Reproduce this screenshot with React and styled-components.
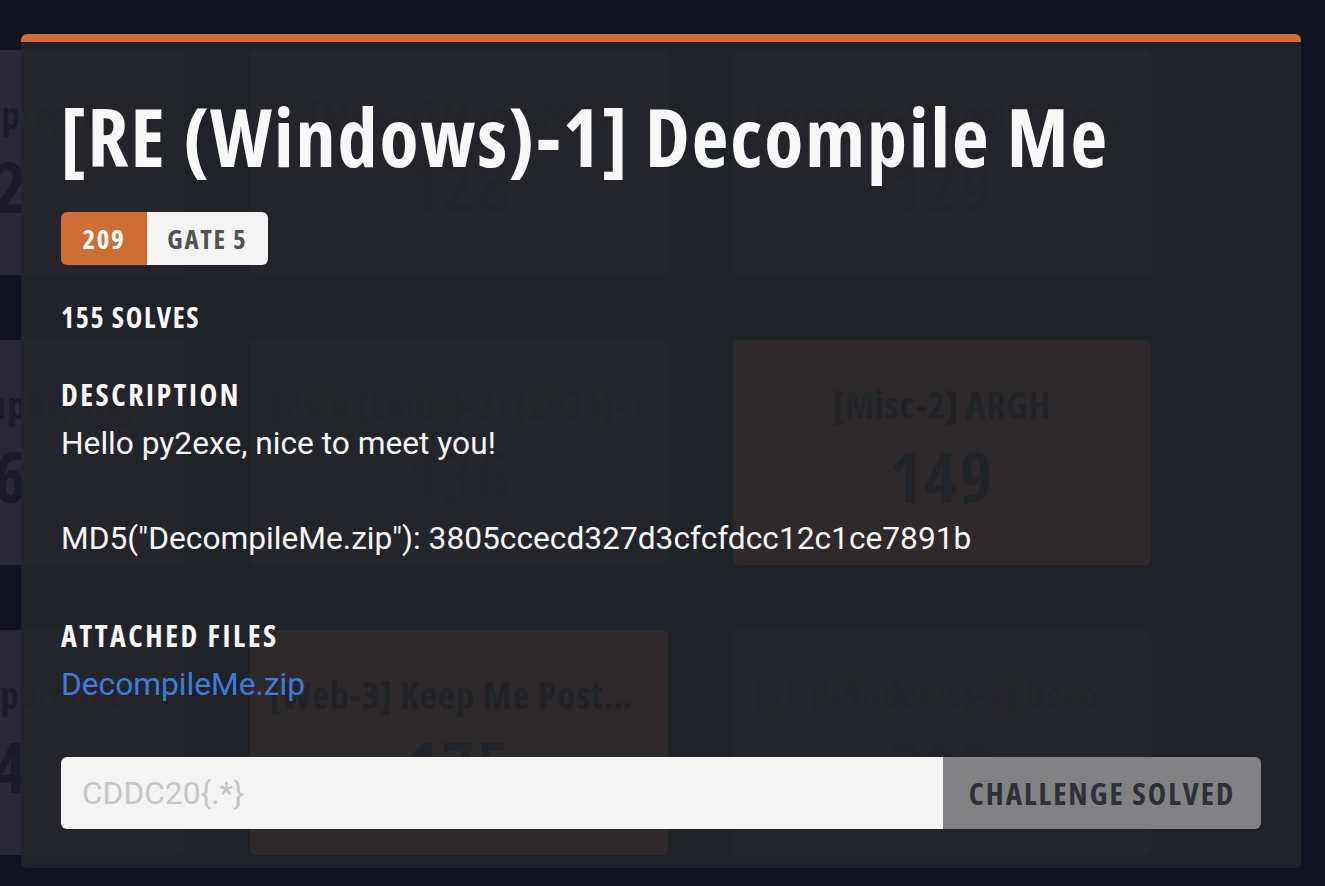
import React from 'react';
import styled, { createGlobalStyle } from 'styled-components';

const COND = `"Open Sans", "Noto Sans", "Liberation Sans", sans-serif`;
const BODY = `Roboto, "Liberation Sans", sans-serif`;

const Global = createGlobalStyle`
  html, body { margin: 0; padding: 0; background: #11131f; overflow: hidden; }
  body { font-family: ${BODY}; }
  * { box-sizing: border-box; }
`;

const Page = styled.div`
  position: relative;
  width: 1325px;
  height: 886px;
  overflow: hidden;
  background: #11131f;
`;

const Grid = styled.div`
  display: grid;
  grid-template-columns: repeat(3, 418px);
  column-gap: 65px;
  row-gap: 65px;
  padding-top: 50px;
  margin-left: -233px;
`;

const Card = styled.div`
  height: 225px;
  border-radius: 6px;
  background: ${(p) => (p.$solved ? '#6a4331' : '#2b2836')};
  color: ${(p) => (p.$solved ? '#161a22' : '#1b1b27')};
  display: flex;
  flex-direction: column;
  align-items: center;
  padding: 43px 20px 0;
  font-family: ${COND};
  font-stretch: 75%;
  font-weight: 700;
`;

const CardTitle = styled.div`
  font-size: 37px;
  line-height: 44px;
  letter-spacing: 1px;
  max-width: 100%;
  white-space: nowrap;
  overflow: hidden;
  text-overflow: ellipsis;
`;

const CardPoints = styled.div`
  margin-top: 9px;
  font-size: 70px;
  line-height: 80px;
  letter-spacing: 2px;
`;

const Overlay = styled.div`
  position: absolute;
  inset: 0;
  padding: 34px 0 0 21px;
`;

const Modal = styled.div`
  width: 1280px;
  background: rgba(34, 37, 41, 0.84);
  border-top: 8px solid #ce6d34;
  border-radius: 6px 6px 5px 5px;
  padding: 46px 40px 39px;
  display: flex;
  flex-direction: column;
  align-items: flex-start;
`;

const Title = styled.h1`
  margin: 0;
  font-family: ${COND};
  font-stretch: 75%;
  font-weight: 700;
  font-size: 80px;
  line-height: 96px;
  letter-spacing: 2px;
  white-space: nowrap;
  color: #f8f8f8;
`;

const Badges = styled.div`
  display: flex;
  margin-top: 28px;
  height: 53px;
  border-radius: 6px;
  overflow: hidden;
`;

const Badge = styled.div`
  display: flex;
  align-items: center;
  padding: 0 ${(p) => (p.$light ? '20.5px' : '21.5px')};
  background: ${(p) => (p.$light ? '#f4f4f4' : '#ce6d34')};
  color: ${(p) => (p.$light ? '#525252' : '#ffffff')};
  font-family: ${COND};
  font-stretch: 75%;
  font-weight: 700;
  font-size: 27px;
  letter-spacing: 1.6px;
`;

const Solves = styled.div`
  margin-top: 36px;
  font-family: ${COND};
  font-stretch: 75%;
  font-weight: 700;
  font-size: 28px;
  line-height: 32px;
  letter-spacing: 1.6px;
  color: #f8f8f8;
`;

const SectionHead = styled.div`
  margin-top: ${(p) => p.$top}px;
  font-family: ${COND};
  font-stretch: 75%;
  font-weight: 700;
  font-size: 30px;
  line-height: 32px;
  letter-spacing: 2.5px;
  color: #f8f8f8;
`;

const Body = styled.div`
  margin-top: 9px;
  font-family: ${BODY};
  font-size: 31.7px;
  line-height: 47.5px;
  color: #f6f6f6;
  white-space: pre-line;
`;

const FileLink = styled.a`
  margin-top: 9px;
  font-family: ${BODY};
  font-size: 31.7px;
  line-height: 47.5px;
  color: #3f7bd7;
  text-decoration: none;
`;

const SubmitRow = styled.div`
  display: flex;
  width: 100%;
  height: 72px;
  margin-top: 49px;
`;

const FlagInput = styled.input`
  flex: 1;
  border: none;
  outline: none;
  border-radius: 6px 0 0 6px;
  background: #f4f4f4;
  padding: 0 21px;
  font-family: ${BODY};
  font-size: 31.7px;
  color: #333;
  &::placeholder { color: #c6c6c6; }
`;

const SolvedButton = styled.button`
  width: 318px;
  border: none;
  border-radius: 0 6px 6px 0;
  background: #828183;
  color: #2d3035;
  font-family: ${COND};
  font-stretch: 75%;
  font-weight: 700;
  font-size: 31px;
  letter-spacing: 2px;
  white-space: nowrap;
  cursor: default;
`;

const cards = [
  { t: '[Crypto-1] Cryptographic Fun', n: 122 },
  { t: '[Misc-1] Magic Mail', n: 128 },
  { t: '[Forensic-1] Shell Shocked', n: 129 },
  { t: '[Crypto-2] Simplify Gigglis', n: 116 },
  { t: '[Pwn (Linux)-2] (2^31)-1', n: 136 },
  { t: '[Misc-2] ARGH', n: 149, s: true },
  { t: '[Web-2] Transparent Layer', n: 144 },
  { t: '[Web-3] Keep Me Posted Please', n: 175, s: true },
  { t: '[RE (Windows)-1] Decompile Me', n: 209 },
];

export default function App() {
  return (
    <Page>
      <Global />
      <Grid>
        {cards.map((c, i) => (
          <Card key={i} $solved={c.s}>
            <CardTitle>{c.t}</CardTitle>
            <CardPoints>{c.n}</CardPoints>
          </Card>
        ))}
      </Grid>
      <Overlay>
        <Modal>
          <Title>[RE (Windows)-1] Decompile Me</Title>
          <Badges>
            <Badge>209</Badge>
            <Badge $light>GATE 5</Badge>
          </Badges>
          <Solves>155 SOLVES</Solves>
          <SectionHead $top={46}>DESCRIPTION</SectionHead>
          <Body>{'Hello py2exe, nice to meet you!\n\u00a0\nMD5("DecompileMe.zip"): 3805ccecd327d3cfcfdcc12c1ce7891b'}</Body>
          <SectionHead $top={57}>ATTACHED FILES</SectionHead>
          <FileLink href="#">DecompileMe.zip</FileLink>
          <SubmitRow>
            <FlagInput placeholder="CDDC20{.*}" />
            <SolvedButton>CHALLENGE SOLVED</SolvedButton>
          </SubmitRow>
        </Modal>
      </Overlay>
    </Page>
  );
}
